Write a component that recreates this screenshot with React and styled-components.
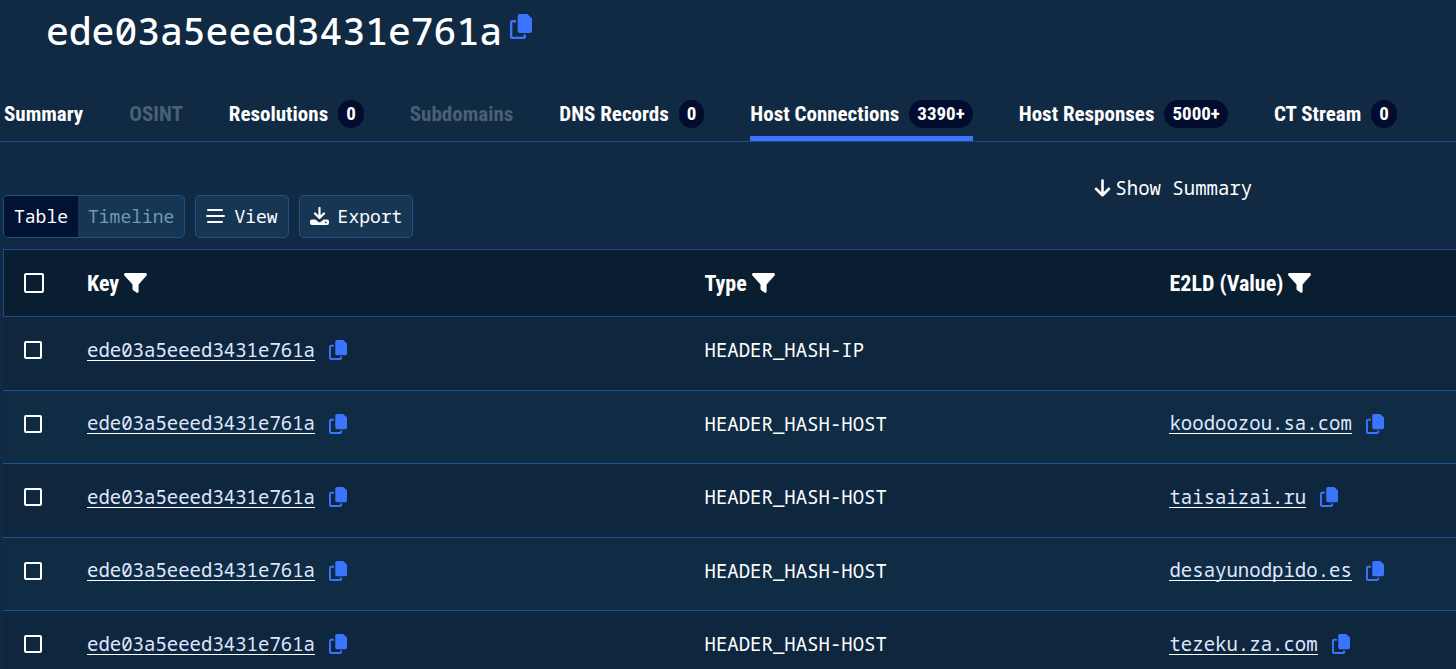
import React from "react";
import styled, { createGlobalStyle } from "styled-components";

const mono = `"Noto Sans Mono", "DejaVu Sans Mono", monospace`;
const condensed = `"Roboto Condensed", "Liberation Sans Narrow", Roboto, sans-serif`;

const GlobalStyle = createGlobalStyle`
  *, *::before, *::after { box-sizing: border-box; }
  body {
    margin: 0;
    background: #102a43;
    color: #fff;
    font-family: ${mono};
    font-size: 19px;
  }
  button { font: inherit; color: inherit; cursor: pointer; }
`;

const Page = styled.main`
  min-height: 100vh;
  overflow-x: hidden;
`;

const TitleBar = styled.header`
  display: flex;
  align-items: flex-start;
  gap: 8px;
  padding: 0 46px;
`;

const Title = styled.h1`
  margin: 0;
  font-size: 38px;
  font-weight: 500;
  line-height: 60px;
`;

const IconButton = styled.button`
  display: inline-flex;
  padding: 0;
  border: 0;
  background: none;
  color: #3b74ff;
  margin-top: ${(p) => (p.$large ? "14px" : "0")};
`;

const Tabs = styled.nav`
  display: flex;
  gap: 46px;
  margin-top: 31px;
  padding-left: 4px;
  border-bottom: 1px solid #1d4a80;
  font-family: ${condensed};
  font-weight: 700;
  font-size: 21px;
`;

const Tab = styled.a`
  display: flex;
  align-items: center;
  gap: 10px;
  height: 50px;
  border-bottom: 5px solid ${(p) => (p.$active ? "#3b74ff" : "transparent")};
  color: ${(p) => (p.$muted ? "#4a6075" : "#fff")};
  text-decoration: none;
  white-space: nowrap;
`;

const Badge = styled.span`
  padding: 0 8px;
  border-radius: 14px;
  background: #020c2e;
  font-size: 19px;
  line-height: 28px;
`;

const Toolbar = styled.div`
  display: flex;
  align-items: flex-start;
  justify-content: space-between;
  padding: 34px 14% 11px 3px;
`;

const Actions = styled.div`
  display: flex;
  gap: 10px;
  margin-top: 19px;
  font-size: 18px;
`;

const Segments = styled.div`
  display: flex;
  height: 43px;
  border: 1px solid #1f5288;
  border-radius: 5px;
  background: #163654;
  overflow: hidden;
`;

const Segment = styled.button`
  padding: 0 10px 2px;
  border: 0;
  background: ${(p) => (p.$active ? "#021233" : "transparent")};
  color: ${(p) => (p.$active ? "#fff" : "#6d9bb3")};
`;

const ToolButton = styled.button`
  display: flex;
  align-items: center;
  gap: 9px;
  height: 43px;
  padding: 0 10px 2px;
  border: 1px solid #25508c;
  border-radius: 5px;
  background: #163654;
`;

const SummaryToggle = styled.button`
  display: flex;
  align-items: center;
  gap: 4px;
  padding: 0;
  border: 0;
  background: none;
  line-height: 24px;
`;

const TableArea = styled.div`
  padding-left: 3px;
`;

const Table = styled.table`
  width: 100%;
  table-layout: fixed;
  border-collapse: separate;
  border-spacing: 0;
`;

const CheckCol = styled.col` width: 68px; `;
const KeyCol = styled.col` width: 42.5%; `;
const TypeCol = styled.col` width: 32%; `;

const HeadCell = styled.th`
  height: 68px;
  padding: 0 0 0 16px;
  border-top: 1px solid #23488a;
  border-bottom: 1px solid #23488a;
  background: #0a1e32;
  font-family: ${condensed};
  font-size: 22px;
  font-weight: 700;
  text-align: left;
  &:first-child {
    padding-left: 20px;
    border-left: 1px solid #23488a;
  }
`;

const HeadLabel = styled.div`
  display: flex;
  align-items: center;
  gap: 5px;
`;

const Row = styled.tr`
  background: ${(p) => (p.$shaded ? "#0f273e" : "#102b44")};
`;

const Cell = styled.td`
  height: ${(p) => (p.$tall ? "74px" : "73px")};
  padding: 0 0 7px 16px;
  border-bottom: 1px solid #1b538f;
  &:first-child { padding-left: 21px; }
`;

const Check = styled.input`
  display: block;
  appearance: none;
  width: ${(p) => (p.$large ? "20px" : "18px")};
  height: ${(p) => (p.$large ? "20px" : "18px")};
  margin: 0;
  border: 2px solid #fff;
  border-radius: 2px;
  &:checked { background: #3b74ff; }
`;

const ValueGroup = styled.div`
  display: flex;
  align-items: center;
  gap: 14px;
`;

const ValueLink = styled.a`
  color: #dfe7ff;
  line-height: 20px;
  border-bottom: 1px solid #fff;
  text-decoration: none;
`;

function CopyIcon({ width, height }) {
  return (
    <svg width={width} height={height} viewBox="0 0 66 74" preserveAspectRatio="none" aria-hidden="true">
      <path
        fill="currentColor"
        d="M29 0H52L66 13V50Q66 56 60 56H29Q23 56 23 50V6Q23 0 29 0Z"
      />
      <path
        fill="none"
        stroke="currentColor"
        strokeWidth="7"
        strokeLinejoin="round"
        d="M18 21.5H7.5Q3.500 21.500 3.500 25.500V66.500Q3.500 70.500 7.500 70.500H40Q44.500 70.500 44.500 66.500V61"
      />
    </svg>
  );
}

const FilterIcon = () => (
  <svg width="23" height="20" viewBox="0 0 23 20" aria-hidden="true">
    <path
      fill="currentColor"
      d="M1.6 0H21.4C22.7 0 23.4 1.4 22.6 2.4L14.6 11.4V18.6C14.6 19.8 13.4 20.3 12.5 19.6L9.2 17.2C8.7 16.8 8.5 16.3 8.5 15.8V11.4L.4 2.4C-.4 1.4.3 0 1.6 0Z"
    />
  </svg>
);

const MenuIcon = () => (
  <svg width="19" height="14" viewBox="0 0 19 14" aria-hidden="true">
    <path
      stroke="currentColor"
      strokeWidth="2"
      strokeLinecap="round"
      d="M2 1H16M1 7H18M2 13H16"
    />
  </svg>
);

const ExportIcon = () => (
  <svg width="19" height="18" viewBox="0 0 19 18" aria-hidden="true">
    <path
      fill="none"
      stroke="currentColor"
      strokeWidth="2.2"
      strokeLinecap="round"
      strokeLinejoin="round"
      d="M9.500 1V10.500M5 6.500L9.500 11L14 6.500"
    />
    <path
      fill="currentColor"
      fillRule="evenodd"
      d="M2 12.500H5.200L8.200 14.800Q9.500 15.800 10.800 14.800L13.800 12.500H17Q19 12.500 19 14.300V16Q19 18 17 18H2Q0 18 0 16V14.300Q0 12.500 2 12.500ZM15.800 14.400A.9.9 0 1 0 15.800 16.200A.9.9 0 1 0 15.800 14.400Z"
    />
  </svg>
);

const ArrowDownIcon = () => (
  <svg width="17" height="18" viewBox="0 0 17 18" aria-hidden="true">
    <path
      fill="none"
      stroke="currentColor"
      strokeWidth="2.6"
      strokeLinecap="round"
      strokeLinejoin="round"
      d="M8.500 1.500V16M2 9.800L8.500 16.200L15 9.800"
    />
  </svg>
);

const tabs = [
  { label: "Summary" },
  { label: "OSINT", muted: true },
  { label: "Resolutions", count: "0" },
  { label: "Subdomains", muted: true },
  { label: "DNS Records", count: "0" },
  { label: "Host Connections", count: "3390+", active: true },
  { label: "Host Responses", count: "5000+" },
  { label: "CT Stream", count: "0" },
];

const hash = "ede03a5eeed3431e761a";

const rows = [
  { type: "HEADER_HASH-IP" },
  { type: "HEADER_HASH-HOST", value: "koodoozou.sa.com" },
  { type: "HEADER_HASH-HOST", value: "taisaizai.ru" },
  { type: "HEADER_HASH-HOST", value: "desayunodpido.es" },
  { type: "HEADER_HASH-HOST", value: "tezeku.za.com" },
];

function CopyableValue({ text }) {
  return (
    <ValueGroup>
      <ValueLink href="#">{text}</ValueLink>
      <IconButton type="button" aria-label={`Copy ${text}`}>
        <CopyIcon width={18} height={20} />
      </IconButton>
    </ValueGroup>
  );
}

export default function App() {
  return (
    <>
      <GlobalStyle />
      <Page>
        <TitleBar>
          <Title>{hash}</Title>
          <IconButton type="button" $large aria-label={`Copy ${hash}`}>
            <CopyIcon width={22} height={25} />
          </IconButton>
        </TitleBar>
        <Tabs>
          {tabs.map((t) => (
            <Tab key={t.label} href="#" $active={t.active} $muted={t.muted}>
              {t.label}
              {t.count && <Badge>{t.count}</Badge>}
            </Tab>
          ))}
        </Tabs>
        <Toolbar>
          <Actions>
            <Segments>
              <Segment type="button" $active>Table</Segment>
              <Segment type="button">Timeline</Segment>
            </Segments>
            <ToolButton type="button"><MenuIcon />View</ToolButton>
            <ToolButton type="button"><ExportIcon />Export</ToolButton>
          </Actions>
          <SummaryToggle type="button"><ArrowDownIcon />Show Summary</SummaryToggle>
        </Toolbar>
        <TableArea>
          <Table>
            <colgroup>
              <CheckCol />
              <KeyCol />
              <TypeCol />
              <col />
            </colgroup>
            <thead>
              <tr>
                <HeadCell><Check type="checkbox" $large aria-label="Select all rows" /></HeadCell>
                {["Key", "Type", "E2LD (Value)"].map((h) => (
                  <HeadCell key={h}>
                    <HeadLabel>{h}<FilterIcon /></HeadLabel>
                  </HeadCell>
                ))}
              </tr>
            </thead>
            <tbody>
              {rows.map((r, i) => (
                <Row key={i} $shaded={i % 2 === 0}>
                  <Cell $tall={i % 2 === 0}>
                    <Check type="checkbox" aria-label={`Select row ${i + 1}`} />
                  </Cell>
                  <Cell><CopyableValue text={hash} /></Cell>
                  <Cell>{r.type}</Cell>
                  <Cell>{r.value && <CopyableValue text={r.value} />}</Cell>
                </Row>
              ))}
            </tbody>
          </Table>
        </TableArea>
      </Page>
    </>
  );
}
